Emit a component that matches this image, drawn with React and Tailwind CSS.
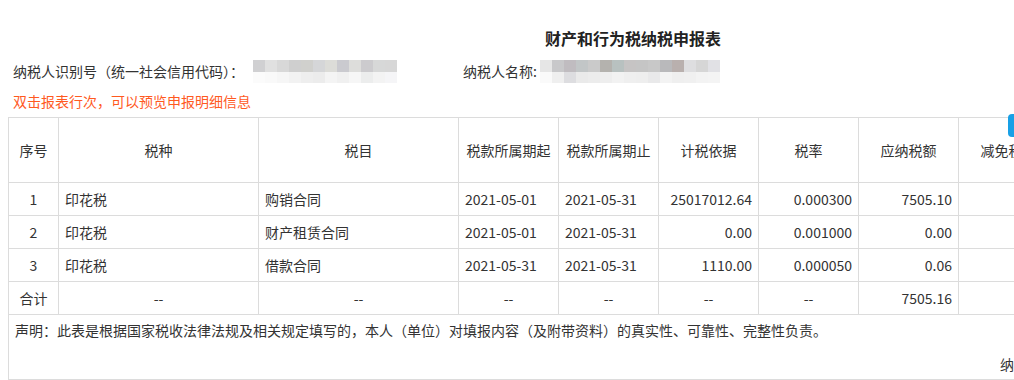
const idBlurTop = ['bg-[#d0d0d2]', 'bg-[#e0e0e0]', 'bg-[#d8d8d8]', 'bg-[#cfcfcf]', 'bg-[#d0d0cd]', 'bg-[#d5d6d8]', 'bg-[#dcdcd8]', 'bg-[#cacacf]', 'bg-[#dddddb]', 'bg-[#cccbce]', 'bg-[#d7d8d8]', 'bg-[#d7d7d7]'];
const idBlurBottom = ['bg-[#fbfbfb]', 'bg-[#f9f9f9]', 'bg-[#f6f6f6]', 'bg-[#f2f2f2]', 'bg-[#eeeeee]', 'bg-[#ececec]', 'bg-[#f4f4f4]', 'bg-[#f0f0f0]', 'bg-[#f6f6f6]', 'bg-[#eceded]', 'bg-[#f3f3f3]', 'bg-[#f5f5f7]'];
const nameBlurTop = ['bg-[#e6e6e6]', 'bg-[#c8c8ca]', 'bg-[#c0bcc0]', 'bg-[#c2c6c7]', 'bg-[#cacaca]', 'bg-[#b4b2ae]', 'bg-[#b8c1c0]', 'bg-[#c6c4c4]', 'bg-[#c5c5c5]', 'bg-[#c8c8c8]', 'bg-[#b9b9bb]', 'bg-[#b9b0ae]', 'bg-[#dedee0]', 'bg-[#d6d6d6]', 'bg-[#e1e1e5]'];
const nameBlurBottom = ['bg-[#fafafa]', 'bg-[#efefef]', 'bg-[#dddde0]', 'bg-[#eaeaea]', 'bg-[#ececec]', 'bg-[#eeeeee]', 'bg-[#f2f2f2]', 'bg-[#efefef]', 'bg-[#eeeeee]', 'bg-[#e9e9ea]', 'bg-[#f3f3f3]', 'bg-[#efefef]', 'bg-[#f0f0f0]', 'bg-[#f3f3f3]', 'bg-[#f4f4f4]'];

const rows = [
  { no: '1', kind: '印花税', item: '购销合同', from: '2021-05-01', to: '2021-05-31', base: '25017012.64', rate: '0.000300', due: '7505.10' },
  { no: '2', kind: '印花税', item: '财产租赁合同', from: '2021-05-01', to: '2021-05-31', base: '0.00', rate: '0.001000', due: '0.00' },
  { no: '3', kind: '印花税', item: '借款合同', from: '2021-05-31', to: '2021-05-31', base: '1110.00', rate: '0.000050', due: '0.06' },
];

const headers = ['序号', '税种', '税目', '税款所属期起', '税款所属期止', '计税依据', '税率', '应纳税额', '减免税额', '已缴税额', '应补（退）税额'];

function Mosaic({ top, bottom }) {
  return (
    <div className="flex flex-col">
      <div className="flex">
        {top.map((c, i) => (
          <div key={i} className={`w-[12px] h-[12px] ${c}`} />
        ))}
      </div>
      <div className="flex">
        {bottom.map((c, i) => (
          <div key={i} className={`w-[12px] h-[11px] ${c}`} />
        ))}
      </div>
    </div>
  );
}

const cell = 'border border-[#dcdcdc] px-[6px]';

export default function App() {
  return (
    <div
      className="relative w-[1014px] h-[380px] overflow-hidden bg-white text-[#333] text-[14px]"
      style={{ fontFamily: '"Noto Sans CJK SC", "Noto Sans", sans-serif' }}
    >
      <div className="w-[1266px]">
        {/* title */}
        <div className="mt-[27px] h-[22px] leading-[22px] text-center text-[16px] font-bold text-[#222]">
          财产和行为税纳税申报表
        </div>

        {/* taxpayer info */}
        <div className="mt-[10px] h-[24px] flex items-center">
          <div className="w-[463px] pl-[13px] flex items-center">
            <span className="leading-[24px]">纳税人识别号（统一社会信用代码）：</span>
            <div className="ml-[9px]">
              <Mosaic top={idBlurTop} bottom={idBlurBottom} />
            </div>
          </div>
          <div className="flex items-center">
            <span className="leading-[24px]">纳税人名称:</span>
            <div className="ml-[3px]">
              <Mosaic top={nameBlurTop} bottom={nameBlurBottom} />
            </div>
          </div>
        </div>

        <div className="mt-[8px] h-[20px] leading-[20px] pl-[13px] text-[#ff5a1f]">
          双击报表行次，可以预览申报明细信息
        </div>

        {/* table */}
        <table className="mt-[6px] ml-[8px] border-collapse table-fixed w-[1250px]">
          <colgroup>
            {headers.map((h, i) => (
              <col key={h} className={i === 0 ? 'w-[50px]' : i < 3 ? 'w-[200px]' : 'w-[100px]'} />
            ))}
          </colgroup>
          <thead>
            <tr className="h-[65px]">
              {headers.map((h) => (
                <th key={h} className={`${cell} font-normal text-center whitespace-nowrap`}>{h}</th>
              ))}
            </tr>
          </thead>
          <tbody>
            {rows.map((r) => (
              <tr key={r.no} className="h-[33px]">
                <td className={`${cell} text-center`}>{r.no}</td>
                <td className={cell}>{r.kind}</td>
                <td className={cell}>{r.item}</td>
                <td className={cell}>{r.from}</td>
                <td className={cell}>{r.to}</td>
                <td className={`${cell} text-right`}>{r.base}</td>
                <td className={`${cell} text-right`}>{r.rate}</td>
                <td className={`${cell} text-right`}>{r.due}</td>
                <td className={cell}></td>
                <td className={cell}></td>
                <td className={cell}></td>
              </tr>
            ))}
            <tr className="h-[33px]">
              <td className={`${cell} text-center`}>合计</td>
              {['--', '--', '--', '--', '--', '--'].map((d, i) => (
                <td key={i} className={`${cell} text-center`}>{d}</td>
              ))}
              <td className={`${cell} text-right`}>7505.16</td>
              <td className={cell}></td>
              <td className={cell}></td>
              <td className={cell}></td>
            </tr>
            <tr className="h-[65px]">
              <td colSpan={11} className={`${cell} align-top`}>
                <div className="pt-[5px] leading-[20px]">
                  声明：此表是根据国家税收法律法规及相关规定填写的，本人（单位）对填报内容（及附带资料）的真实性、可靠性、完整性负责。
                </div>
                <div className="mt-[14px] pl-[985px] leading-[20px] whitespace-nowrap">
                  纳税人（签章）：
                </div>
              </td>
            </tr>
          </tbody>
        </table>
      </div>

      {/* side tab */}
      <div className="absolute left-[1008px] top-[114px] w-[30px] h-[23px] rounded-[4px] bg-[#18a0e6]" />
    </div>
  );
}
